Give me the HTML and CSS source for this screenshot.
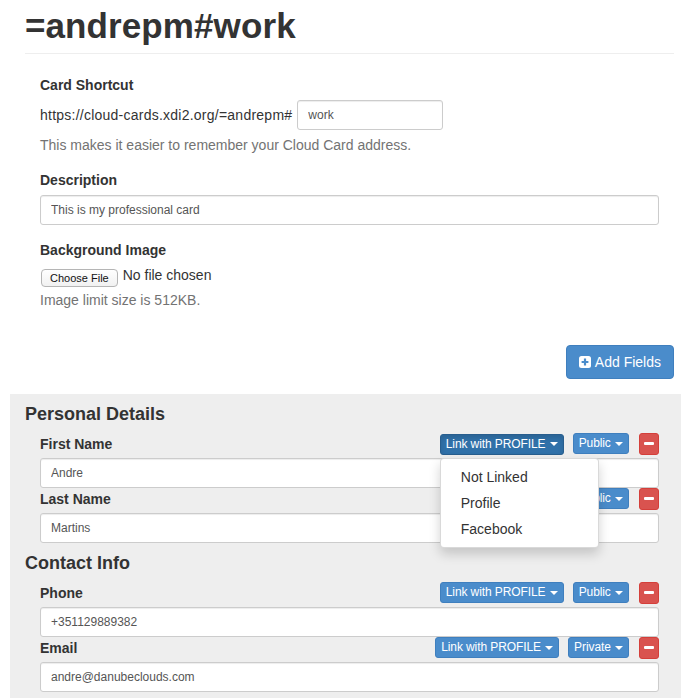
FILE: index.html
```html
<!DOCTYPE html>
<html>
<head>
<meta charset="utf-8">
<title>=andrepm#work</title>
<link rel="stylesheet" href="styles.css">
</head>
<body>
<div class="page-header"><h1>=andrepm#work</h1></div>

<form class="card-form">
  <div class="form-group">
    <label class="label">Card Shortcut</label>
    <div class="shortcut-row">
      <span class="shortcut-url">https://cloud-cards.xdi2.org/=andrepm#</span>
      <input class="input input-short" type="text" value="work">
    </div>
    <p class="help">This makes it easier to remember your Cloud Card address.</p>
  </div>
  <div class="form-group">
    <label class="label">Description</label>
    <input class="input input-wide" type="text" value="This is my professional card">
  </div>
  <div class="form-group">
    <label class="label">Background Image</label>
    <div class="file-row">
      <span class="file-btn">Choose File</span>
      <span>No file chosen</span>
    </div>
    <p class="help">Image limit size is 512KB.</p>
  </div>
</form>

<div class="actions">
  <button class="btn-add" type="button">
    <svg class="plus-icon" width="12" height="12" viewBox="0 0 12 12"><rect x="0" y="0" width="12" height="12" rx="2.5" fill="#fff"/><path d="M6 2.6v6.8M2.6 6h6.8" stroke="#4a8ccb" stroke-width="2.2"/></svg>Add Fields
  </button>
</div>

<div class="fields">
  <h4 class="section-title">Personal Details</h4>

  <div class="field">
    <div class="field-head">
      <label class="label">First Name</label>
      <div class="controls">
        <div class="dropdown">
          <button class="btn-xs btn-link-profile active" type="button">Link with PROFILE <span class="caret"></span></button>
          <ul class="menu">
            <li><a>Not Linked</a></li>
            <li><a>Profile</a></li>
            <li><a>Facebook</a></li>
          </ul>
        </div>
        <button class="btn-xs btn-vis" type="button">Public <span class="caret"></span></button>
        <button class="btn-remove" type="button"><span class="minus"></span></button>
      </div>
    </div>
    <input class="input input-wide" type="text" value="Andre">
  </div>

  <div class="field">
    <div class="field-head">
      <label class="label">Last Name</label>
      <div class="controls">
        <button class="btn-xs btn-link-profile" type="button">Link with PROFILE <span class="caret"></span></button>
        <button class="btn-xs btn-vis" type="button">Public <span class="caret"></span></button>
        <button class="btn-remove" type="button"><span class="minus"></span></button>
      </div>
    </div>
    <input class="input input-wide" type="text" value="Martins">
  </div>

  <h4 class="section-title">Contact Info</h4>

  <div class="field">
    <div class="field-head">
      <label class="label">Phone</label>
      <div class="controls">
        <button class="btn-xs btn-link-profile" type="button">Link with PROFILE <span class="caret"></span></button>
        <button class="btn-xs btn-vis" type="button">Public <span class="caret"></span></button>
        <button class="btn-remove" type="button"><span class="minus"></span></button>
      </div>
    </div>
    <input class="input input-wide" type="text" value="+351129889382">
  </div>

  <div class="field">
    <div class="field-head">
      <label class="label">Email</label>
      <div class="controls">
        <button class="btn-xs btn-link-profile" type="button">Link with PROFILE <span class="caret"></span></button>
        <button class="btn-xs btn-vis" type="button">Private <span class="caret"></span></button>
        <button class="btn-remove" type="button"><span class="minus"></span></button>
      </div>
    </div>
    <input class="input input-wide" type="text" value="andre@danubeclouds.com">
  </div>
</div>
</body>
</html>
```

FILE: styles.css
```css
html, body {
  margin: 0;
  padding: 0;
  overflow: hidden;
}
body {
  width: 681px;
  font-family: "Liberation Sans", Arial, sans-serif;
  font-size: 14px;
  line-height: 20px;
  color: #333;
  background: #fff;
}

.page-header {
  margin: 0 7px 0 25px;
  padding: 7px 0 8px;
  border-bottom: 1px solid #eee;
}
.page-header h1 {
  margin: 0;
  font-size: 35px;
  line-height: 38px;
  font-weight: bold;
  color: #333;
  letter-spacing: 0.1px;
}

.card-form {
  padding: 21px 22px 0 40px;
}
.form-group {
  margin-bottom: 15px;
}
.form-group:last-child {
  margin-bottom: 0;
}
.label {
  display: block;
  font-weight: bold;
  margin-bottom: 5px;
}
.shortcut-row {
  display: flex;
  align-items: center;
  gap: 5px;
  height: 30px;
}
.shortcut-url {
  letter-spacing: 0.24px;
}
.input {
  box-sizing: border-box;
  height: 30px;
  padding: 5px 10px;
  font-family: "Liberation Sans", Arial, sans-serif;
  font-size: 12px;
  color: #555;
  background: #fff;
  border: 1px solid #ccc;
  border-radius: 3px;
  box-shadow: inset 0 1px 1px rgba(0, 0, 0, 0.075);
  outline: none;
}
.input-wide {
  display: block;
  width: 100%;
}
.input-short {
  width: 146px;
}
.help {
  margin: 5px 0 0;
  color: #737373;
}
.file-row {
  display: flex;
  align-items: center;
  gap: 5px;
  height: 20px;
}
.file-btn {
  box-sizing: border-box;
  margin: 6px 0 0 1px;
  height: 18px;
  padding: 0 8px;
  font-size: 11px;
  line-height: 16px;
  color: #111;
  background: linear-gradient(#fff, #f1f1f1);
  border: 1px solid #b5b5b5;
  border-radius: 4px;
}

.actions {
  display: flex;
  justify-content: flex-end;
  margin: 35px 7px 15px 0;
}
.btn-add {
  display: flex;
  align-items: center;
  box-sizing: border-box;
  height: 34px;
  padding: 6px 12px;
  font-family: "Liberation Sans", Arial, sans-serif;
  font-size: 14px;
  line-height: 20px;
  color: #fff;
  background: #4a8ccb;
  border: 1px solid #3f7fbe;
  border-radius: 4px;
}
.plus-icon {
  margin-right: 4px;
}

.fields {
  margin-left: 10px;
  padding: 0 22px 20px 15px;
  background: #eee;
}
.section-title {
  margin: 0;
  padding-top: 1px;
  height: 38px;
  font-size: 18px;
  line-height: 38px;
  font-weight: bold;
}
.field {
  padding-left: 15px;
}
.field-head {
  display: flex;
  align-items: center;
  justify-content: space-between;
  height: 21px;
  margin-bottom: 4px;
}
.field-head .label {
  margin: 0;
}
.controls {
  display: flex;
  align-items: center;
}
.dropdown {
  position: relative;
  margin-right: 9px;
}
.btn-xs {
  box-sizing: border-box;
  height: 21px;
  padding: 0 5px;
  font-family: "Liberation Sans", Arial, sans-serif;
  font-size: 12px;
  line-height: 19px;
  letter-spacing: -0.1px;
  color: #fff;
  background: #4a8ccb;
  border: 1px solid #3f7fbe;
  border-radius: 3px;
  white-space: nowrap;
}
.controls > .btn-link-profile {
  margin-right: 9px;
}
.btn-link-profile.active {
  background: #3071a9;
  border-color: #285e8e;
  box-shadow: inset 0 3px 5px rgba(0, 0, 0, 0.125);
}
.btn-vis {
  margin-right: 10px;
}
.caret {
  display: inline-block;
  width: 0;
  height: 0;
  margin-left: 1px;
  vertical-align: middle;
  border-top: 4px solid #fff;
  border-left: 4px solid transparent;
  border-right: 4px solid transparent;
}
.btn-remove {
  display: flex;
  align-items: center;
  justify-content: center;
  box-sizing: border-box;
  width: 20px;
  height: 22px;
  padding: 0;
  background: #d9534f;
  border: 1px solid #d43f3a;
  border-radius: 3px;
}
.minus {
  display: block;
  width: 10px;
  height: 3px;
  background: #fff;
  border-radius: 1px;
}

.menu {
  position: absolute;
  left: 0;
  top: calc(100% + 3px);
  z-index: 10;
  box-sizing: border-box;
  min-width: 159px;
  margin: 0;
  padding: 5px 0;
  list-style: none;
  background: #fff;
  border: 1px solid rgba(0, 0, 0, 0.15);
  border-radius: 4px;
  box-shadow: 0 6px 12px rgba(0, 0, 0, 0.175);
  font-size: 14px;
}
.menu a {
  display: block;
  padding: 3px 20px;
  line-height: 20px;
  color: #333;
  white-space: nowrap;
}
```
